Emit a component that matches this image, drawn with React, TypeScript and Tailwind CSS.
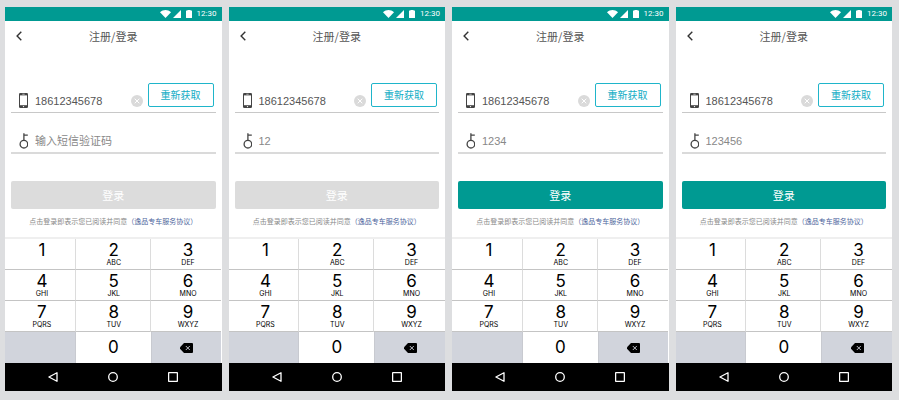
import { useState } from "react";

const KEYS = [
  { digit: "1", letters: "" },
  { digit: "2", letters: "ABC" },
  { digit: "3", letters: "DEF" },
  { digit: "4", letters: "GHI" },
  { digit: "5", letters: "JKL" },
  { digit: "6", letters: "MNO" },
  { digit: "7", letters: "PQRS" },
  { digit: "8", letters: "TUV" },
  { digit: "9", letters: "WXYZ" },
];

function StatusBar() {
  return (
    <div className="flex h-[14px] items-center justify-end bg-[#009a92] pr-[5px] text-white">
      <svg width="11" height="8" viewBox="0 0 11 8" fill="currentColor" aria-hidden="true">
        <path d="M0 2.2C3.2-.6 7.8-.6 11 2.2L5.5 8Z" />
      </svg>
      <svg className="ml-0.5" width="8" height="8" viewBox="0 0 8 8" fill="currentColor" aria-hidden="true">
        <path d="M8 0V8H0Z" />
      </svg>
      <svg className="ml-[5px]" width="6" height="8" viewBox="0 0 6 8" fill="currentColor" aria-hidden="true">
        <path d="M1.5 0H4.5V.6H5.5Q6 .6 6 1.1V7.5Q6 8 5.5 8H.5Q0 8 0 7.5V1.1Q0 .6 .5 .6H1.5Z" />
      </svg>
      <span className="ml-[5px] font-[Roboto,sans-serif] text-[8px] leading-[14px]">12:30</span>
    </div>
  );
}

function PhoneIcon() {
  return (
    <svg width="9" height="15" viewBox="0 0 9 15" aria-hidden="true">
      <rect width="9" height="15" rx="1.3" fill="#444" />
      <rect x="1" y="2.4" width="7" height="9.8" fill="#fff" />
      <path d="M3.3 1.2H5.7" stroke="#fff" strokeWidth=".6" />
      <circle cx="4.5" cy="13.6" r=".7" fill="#fff" />
    </svg>
  );
}

function KeyIcon() {
  return (
    <svg width="9" height="16" viewBox="0 0 9 16" fill="none" stroke="#444" strokeWidth="1.3" aria-hidden="true">
      <circle cx="4.9" cy="11.2" r="3.8" />
      <path d="M4.9 7.4V.3M4.9 2.2H8.8" />
    </svg>
  );
}

function Keypad({ onDigit, onDelete }: { onDigit: (d: string) => void; onDelete: () => void }) {
  return (
    <div className="grid grid-cols-[71fr_75fr_71fr] border-t-2 border-[#efefef] font-[Inter,sans-serif] text-black">
      {KEYS.map((key, i) => (
        <button
          key={key.digit}
          type="button"
          onClick={() => onDigit(key.digit)}
          className={`flex h-[31px] flex-col items-center border-b border-[#c4c4c4] bg-white pt-[3px] ${
            i % 3 === 2 ? "" : "border-r border-r-[#dcdcdc]"
          } ${i % 3 === 1 ? "pl-[2px]" : "pl-1"}`}
        >
          <span className="text-[17px] leading-[17px]">{key.digit}</span>
          <span className="text-[7px] leading-[8px]">{key.letters}</span>
        </button>
      ))}
      <div className="h-[31px] border-r border-[#c8cad0] bg-[#d1d4dc]" />
      <button type="button" onClick={() => onDigit("0")} className="h-[31px] bg-white text-[17px] leading-[31px]">
        0
      </button>
      <button
        type="button"
        aria-label="删除"
        onClick={onDelete}
        className="flex h-[31px] items-center justify-center border-l border-[#c8cad0] bg-[#d1d4dc]"
      >
        <svg width="13" height="10" viewBox="0 0 13 10" aria-hidden="true">
          <path d="M4 0H12Q13 0 13 1V9Q13 10 12 10H4L0 5.8V4.2Z" fill="#000" />
          <path d="M5.8 3 9.8 7M9.8 3 5.8 7" stroke="#d1d4dc" strokeWidth=".9" />
        </svg>
      </button>
    </div>
  );
}

function NavBar() {
  return (
    <div className="flex h-7 items-center justify-center gap-[50px] bg-black text-white">
      <button type="button" aria-label="返回">
        <svg width="10" height="10" viewBox="0 0 10 10" fill="none" stroke="currentColor" strokeWidth="1.3" strokeLinejoin="round" aria-hidden="true">
          <path d="M9 .7V9.3L.9 5Z" />
        </svg>
      </button>
      <button type="button" aria-label="主页">
        <svg width="10" height="10" viewBox="0 0 10 10" fill="none" stroke="currentColor" strokeWidth="1.3" aria-hidden="true">
          <circle cx="5" cy="5" r="4.3" />
        </svg>
      </button>
      <button type="button" aria-label="最近任务">
        <svg width="10" height="10" viewBox="0 0 10 10" fill="none" stroke="currentColor" strokeWidth="1.3" aria-hidden="true">
          <rect x=".6" y=".6" width="8.8" height="8.8" rx=".6" />
        </svg>
      </button>
    </div>
  );
}

function LoginScreen({ id, initialCode }: { id: string; initialCode: string }) {
  const [phone, setPhone] = useState("18612345678");
  const [code, setCode] = useState(initialCode);
  const ready = code.length >= 4;

  return (
    <section className="min-w-0 bg-white">
      <StatusBar />
      <header className="grid h-[30px] grid-cols-[1fr_auto_1fr] items-center px-[10px]">
        <button type="button" aria-label="返回" className="justify-self-start">
          <svg width="8" height="10" viewBox="0 0 8 10" fill="none" stroke="#333" strokeWidth="1.4" aria-hidden="true">
            <path d="M6.3 .8 2.1 5 6.3 9.2" />
          </svg>
        </button>
        <h1 className="text-[11px] leading-[16px] text-[#555]">注册/登录</h1>
      </header>

      <form className="px-[6px] pt-8" onSubmit={(e) => e.preventDefault()}>
        <div className="flex items-end border-b border-[#c8c8c8] pr-[2px] pl-2">
          <label htmlFor={`${id}-phone`} aria-label="手机号" className="flex h-[23px] items-center">
            <PhoneIcon />
          </label>
          <input
            id={`${id}-phone`}
            type="tel"
            value={phone}
            onChange={(e) => setPhone(e.target.value)}
            className="ml-[7px] h-[23px] w-0 flex-1 font-['Liberation_Sans','Noto_Sans_CJK_SC',sans-serif] text-[11px] text-[#555] outline-none"
          />
          <button type="button" aria-label="清除" onClick={() => setPhone("")} className="flex h-[23px] items-center">
            <svg width="12" height="12" viewBox="0 0 12 12" aria-hidden="true">
              <circle cx="6" cy="6" r="6" fill="#dadada" />
              <path d="M3.7 3.7 8.3 8.3M8.3 3.7 3.7 8.3" stroke="#fff" strokeWidth="1" />
            </svg>
          </button>
          <button
            type="button"
            className="mb-[5px] ml-[5px] h-6 w-[66px] rounded-[2px] border border-[#1fb5ca] text-[10px] leading-[22px] text-[#12adc5]"
          >
            重新获取
          </button>
        </div>

        <div className="flex items-center border-b-2 border-[#dadada] pt-[17px] pb-px pl-2">
          <label htmlFor={`${id}-code`} aria-label="短信验证码" className="flex h-[21px] items-center">
            <KeyIcon />
          </label>
          <input
            id={`${id}-code`}
            inputMode="numeric"
            placeholder="输入短信验证码"
            value={code}
            onChange={(e) => setCode(e.target.value)}
            className="ml-[7px] h-[21px] w-0 flex-1 font-['Liberation_Sans','Noto_Sans_CJK_SC',sans-serif] text-[11px] text-[#888] outline-none placeholder:text-[#888]"
          />
        </div>

        <button
          type="submit"
          disabled={!ready}
          className={`mt-[27px] block h-7 w-full rounded-[2px] text-[11px] leading-[28px] text-white ${
            ready ? "bg-[#009a92]" : "bg-[#dcdcdc]"
          }`}
        >
          登录
        </button>
      </form>

      <p className="mt-[6px] mb-[10px] text-center text-[7px] leading-[12px] whitespace-nowrap text-[#8a8a8a]">
        点击登录即表示您已阅读并同意
        <a href="#agreement" className="text-[#4d659c]">
          （逸品专车服务协议）
        </a>
      </p>

      <Keypad onDigit={(d) => setCode(code + d)} onDelete={() => setCode(code.slice(0, -1))} />
      <NavBar />
    </section>
  );
}

export default function App() {
  return (
    <main className="grid min-h-screen grid-cols-4 items-start gap-[7px] bg-[#dddee0] pt-[7px] pr-[7px] pb-2 pl-[5px] font-['Noto_Sans_CJK_SC',sans-serif]">
      <LoginScreen id="empty" initialCode="" />
      <LoginScreen id="partial" initialCode="12" />
      <LoginScreen id="four" initialCode="1234" />
      <LoginScreen id="six" initialCode="123456" />
    </main>
  );
}
